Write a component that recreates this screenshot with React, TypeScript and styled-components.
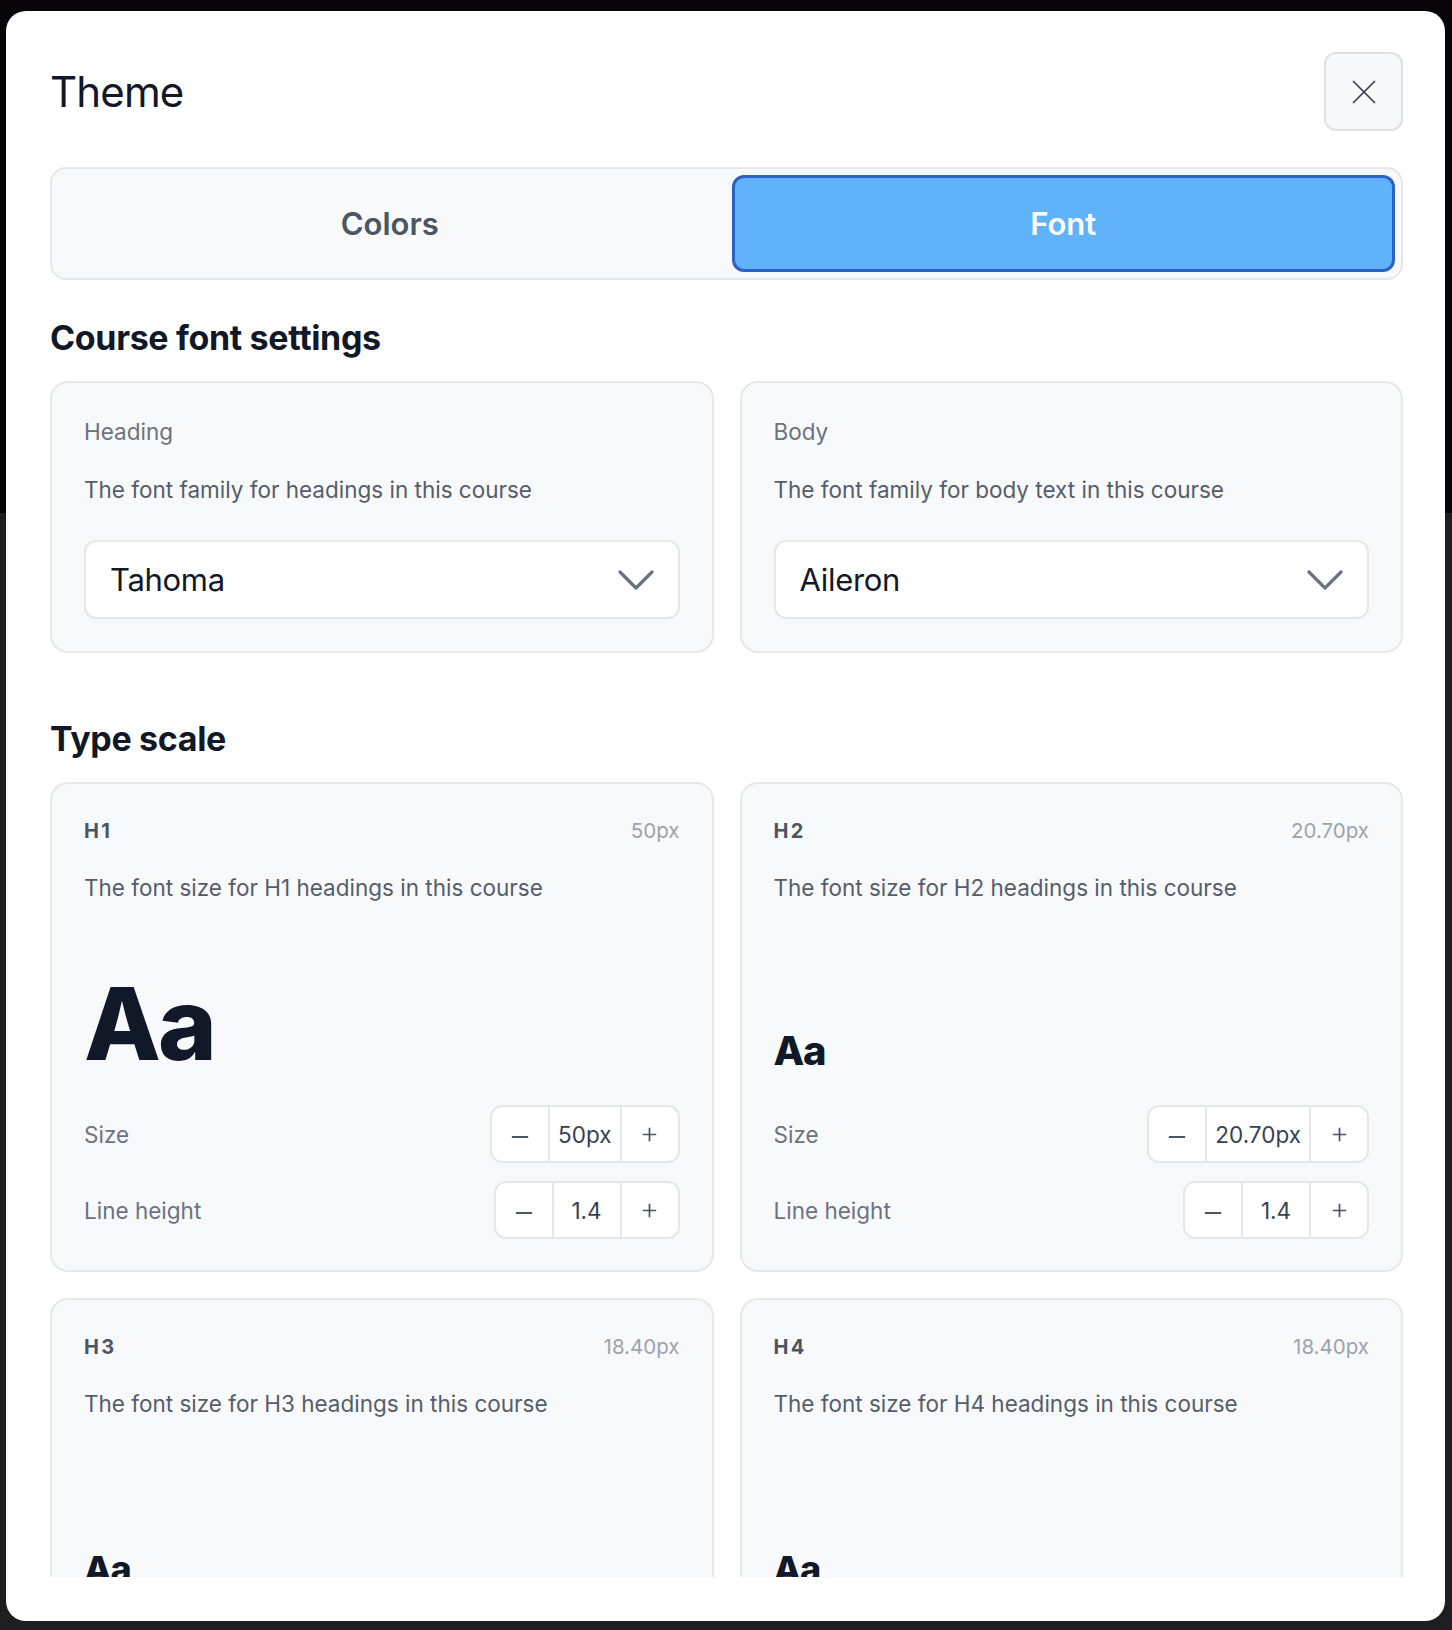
import React from 'react';
import styled, { createGlobalStyle } from 'styled-components';
import { Minus, Plus, X } from 'lucide-react';

const GlobalStyle = createGlobalStyle`
  html, body {
    margin: 0;
    padding: 0;
  }
  body {
    background: linear-gradient(180deg, #07050a 0%, #07050a 31.5%, #1e1e20 31.5%, #1e1e20 100%);
    font-family: Inter, 'Noto Sans', sans-serif;
    color: #111827;
  }
  * {
    box-sizing: border-box;
  }
`;

const Backdrop = styled.div`
  height: 1630px;
  padding: 11px 7px 9px 6px;
`;

const Modal = styled.div`
  height: 1610px;
  width: 1439px;
  background: #fff;
  border-radius: 20px;
  padding: 41px 42px 44px 44px;
  display: flex;
  flex-direction: column;
`;

const Header = styled.div`
  display: flex;
  align-items: center;
  justify-content: space-between;
  height: 79px;
`;

const Title = styled.h2`
  margin: 0;
  font-size: 42px;
  font-weight: 400;
  letter-spacing: -0.02em;
  color: #111827;
`;

const CloseButton = styled.button`
  width: 79px;
  height: 79px;
  border: 2px solid #dfe1e5;
  border-radius: 12px;
  background: #f7f8fa;
  display: flex;
  align-items: center;
  justify-content: center;
  color: #374151;
  padding: 0;
`;

const Body = styled.div`
  flex: 1;
  margin-top: 36px;
  overflow: hidden;
  display: flex;
  flex-direction: column;
`;

const Tabs = styled.div`
  display: flex;
  flex-shrink: 0;
  gap: 10px;
  height: 113px;
  padding: 6px;
  border: 2px solid #e6e7eb;
  border-radius: 16px;
  background: #f8f9fb;
`;

const Tab = styled.button<{ $active?: boolean }>`
  flex: 1;
  border-radius: 12px;
  border: 3px solid ${p => (p.$active ? '#2b62c6' : 'transparent')};
  background: ${p => (p.$active ? '#60b3fb' : 'transparent')};
  color: ${p => (p.$active ? '#fff' : '#4b5563')};
  font-family: inherit;
  font-size: 31px;
  font-weight: 600;
`;

const SectionTitle = styled.h3`
  margin: 38px 0 23px;
  font-size: 34px;
  line-height: 40px;
  font-weight: 700;
  letter-spacing: -0.01em;
  color: #111827;
`;

const Grid = styled.div`
  display: grid;
  flex-shrink: 0;
  grid-template-columns: 1fr 1fr;
  gap: 26px;
  margin-bottom: 28px;
`;

const Card = styled.div`
  background: #f8f9fb;
  border: 2px solid #e7e8ec;
  border-radius: 18px;
  padding: 32px;
`;

const TypeCard = styled(Card)`
  padding: 32px 32px 31px;
`;

const Label = styled.div`
  font-size: 22.5px;
  line-height: 33px;
  color: #6b7280;
`;

const Description = styled.div`
  margin-top: 25px;
  font-size: 22.5px;
  line-height: 33px;
  color: #555d6b;
`;

const Select = styled.div`
  margin-top: 34px;
  height: 79px;
  background: #fff;
  border: 2px solid #e5e7eb;
  border-radius: 12px;
  padding: 0 24px 0 24px;
  display: flex;
  align-items: center;
  justify-content: space-between;
  font-size: 31px;
  letter-spacing: -0.01em;
  color: #111827;
`;

const CardTop = styled.div`
  display: flex;
  justify-content: space-between;
  align-items: baseline;
  line-height: 30px;
`;

const Tag = styled.span`
  font-size: 20px;
  font-weight: 700;
  letter-spacing: 0.12em;
  color: #4b5563;
`;

const PxValue = styled.span`
  font-size: 20.5px;
  color: #9ca3af;
`;

const Preview = styled.div`
  height: 165px;
  display: flex;
  align-items: flex-end;
`;

const Sample = styled.span<{ $size: number }>`
  font-size: ${p => p.$size}px;
  line-height: 0.9;
  font-weight: 800;
  letter-spacing: -0.03em;
  color: #111827;
`;

const Settings = styled.div`
  margin-top: 36px;
  display: flex;
  flex-direction: column;
  gap: 18px;
`;

const SettingRow = styled.div`
  display: flex;
  align-items: center;
  justify-content: space-between;
`;

const Stepper = styled.div`
  display: flex;
  height: 58px;
  background: #fff;
  border: 2px solid #e5e7eb;
  border-radius: 12px;
  overflow: hidden;
`;

const StepButton = styled.button`
  width: 56px;
  border: none;
  background: transparent;
  display: flex;
  align-items: center;
  justify-content: center;
  color: #4b5563;
  padding: 0;
`;

const StepValue = styled.div`
  min-width: 70px;
  padding: 0 8px;
  border-left: 2px solid #e5e7eb;
  border-right: 2px solid #e5e7eb;
  display: flex;
  align-items: center;
  justify-content: center;
  font-size: 22.5px;
  color: #374151;
`;

const Chevron = () => (
  <svg width="36" height="22" viewBox="0 0 36 22" fill="none">
    <path d="M2 3l16 16L34 3" stroke="#6b7280" strokeWidth="3.2" strokeLinecap="round" strokeLinejoin="round" />
  </svg>
);

interface IFontCard {
  label: string;
  description: string;
  font: string;
}

const FontCard: React.FunctionComponent<IFontCard> = ({ label, description, font }) => (
  <Card>
    <Label>{label}</Label>
    <Description>{description}</Description>
    <Select>
      <span>{font}</span>
      <Chevron />
    </Select>
  </Card>
);

const NumberStepper: React.FunctionComponent<{ value: string }> = ({ value }) => (
  <Stepper>
    <StepButton>
      <Minus size={28} strokeWidth={1.6} strokeLinecap="butt" style={{ marginTop: 5 }} />
    </StepButton>
    <StepValue>{value}</StepValue>
    <StepButton>
      <Plus size={23} strokeWidth={1.8} strokeLinecap="butt" />
    </StepButton>
  </Stepper>
);

interface IScale {
  tag: string;
  px: string;
  sample: number;
  lineHeight: string;
}

const ScaleCard: React.FunctionComponent<IScale> = ({ tag, px, sample, lineHeight }) => (
  <TypeCard>
    <CardTop>
      <Tag>{tag}</Tag>
      <PxValue>{px}</PxValue>
    </CardTop>
    <Description>The font size for {tag} headings in this course</Description>
    <Preview>
      <Sample $size={sample}>Aa</Sample>
    </Preview>
    <Settings>
      <SettingRow>
        <Label>Size</Label>
        <NumberStepper value={px} />
      </SettingRow>
      <SettingRow>
        <Label>Line height</Label>
        <NumberStepper value={lineHeight} />
      </SettingRow>
    </Settings>
  </TypeCard>
);

const scales: IScale[] = [
  { tag: 'H1', px: '50px', sample: 100, lineHeight: '1.4' },
  { tag: 'H2', px: '20.70px', sample: 40, lineHeight: '1.4' },
  { tag: 'H3', px: '18.40px', sample: 36, lineHeight: '1.4' },
  { tag: 'H4', px: '18.40px', sample: 36, lineHeight: '1.4' }
];

const App = () => (
  <>
    <GlobalStyle />
    <Backdrop>
      <Modal>
        <Header>
          <Title>Theme</Title>
          <CloseButton>
            <X size={42} strokeWidth={1} />
          </CloseButton>
        </Header>
        <Body>
          <Tabs>
            <Tab>Colors</Tab>
            <Tab $active>Font</Tab>
          </Tabs>
          <SectionTitle>Course font settings</SectionTitle>
          <Grid>
            <FontCard label="Heading" description="The font family for headings in this course" font="Tahoma" />
            <FontCard label="Body" description="The font family for body text in this course" font="Aileron" />
          </Grid>
          <SectionTitle>Type scale</SectionTitle>
          <Grid>
            {scales.map(s => (
              <ScaleCard key={s.tag} {...s} />
            ))}
          </Grid>
        </Body>
      </Modal>
    </Backdrop>
  </>
);

export default App;
